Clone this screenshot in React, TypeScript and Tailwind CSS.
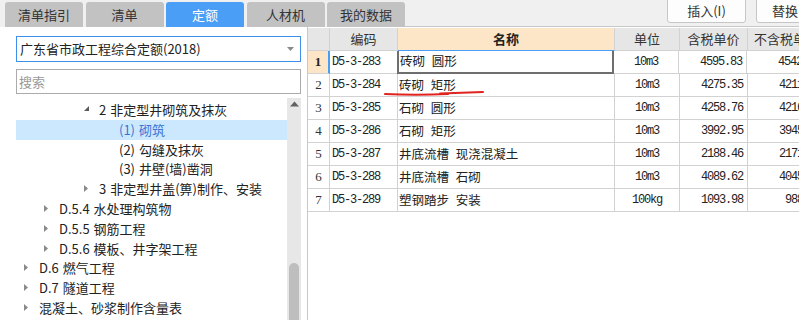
import React from "react";

const cjk = { fontFamily: "'Noto Sans CJK SC', 'Noto Sans', sans-serif" };
const mono = { fontFamily: "'Liberation Mono', 'Noto Sans CJK SC', monospace" };
const serif = { fontFamily: "'Liberation Serif', 'Noto Sans CJK SC', serif" };

const tabs = ["清单指引", "清单", "定额", "人材机", "我的数据"];

type Node = { text: string; arrow: "open" | "closed" | null; arrowX: number; textX: number; selected?: boolean };

const tree: Node[] = [
  { text: "2 非定型井砌筑及抹灰", arrow: "open", arrowX: 67, textX: 83 },
  { text: "(1) 砌筑", arrow: null, arrowX: 0, textX: 103, selected: true },
  { text: "(2) 勾缝及抹灰", arrow: null, arrowX: 0, textX: 103 },
  { text: "(3) 井壁(墙)凿洞", arrow: null, arrowX: 0, textX: 103 },
  { text: "3 非定型井盖(箅)制作、安装", arrow: "closed", arrowX: 67, textX: 83 },
  { text: "D.5.4 水处理构筑物", arrow: "closed", arrowX: 27, textX: 43 },
  { text: "D.5.5 钢筋工程", arrow: "closed", arrowX: 27, textX: 43 },
  { text: "D.5.6 模板、井字架工程", arrow: "closed", arrowX: 27, textX: 43 },
  { text: "D.6 燃气工程", arrow: "closed", arrowX: 7, textX: 23 },
  { text: "D.7 隧道工程", arrow: "closed", arrowX: 7, textX: 23 },
  { text: "混凝土、砂浆制作含量表", arrow: "closed", arrowX: 7, textX: 23 },
];

const rows = [
  ["D5-3-283", "砖砌 圆形", "10m3", "4595.83", "4542.16"],
  ["D5-3-284", "砖砌 矩形", "10m3", "4275.35", "4211.26"],
  ["D5-3-285", "石砌 圆形", "10m3", "4258.76", "4216.47"],
  ["D5-3-286", "石砌 矩形", "10m3", "3992.95", "3945.18"],
  ["D5-3-287", "井底流槽 现浇混凝土", "10m3", "2188.46", "2171.35"],
  ["D5-3-288", "井底流槽 石砌", "10m3", "4089.62", "4045.90"],
  ["D5-3-289", "塑钢踏步 安装", "100kg", "1093.98", "988.41"],
];

function Arrow({ kind }: { kind: "open" | "closed" }) {
  if (kind === "open")
    return (
      <svg width="7" height="7" viewBox="0 0 7 7">
        <path d="M6 1 L6 6 L1 6 Z" fill="#5a5a5a" />
      </svg>
    );
  return (
    <svg width="6" height="9" viewBox="0 0 6 9">
      <path d="M1 1 L5 4.5 L1 8 Z" fill="#8a8a8a" />
    </svg>
  );
}

export default function App() {
  return (
    <div className="relative w-[799px] h-[320px] overflow-hidden bg-[#f0f0f0] flex flex-col" style={cjk}>
      {/* top strip */}
      <div className="h-[27px] flex items-end shrink-0">
        <div className="flex gap-[2.5px] pl-[5px] h-[25px]">
          {tabs.map((t) => (
            <div
              key={t}
              className={
                t === "定额"
                  ? "w-[78px] h-full rounded-t-[3px] bg-[#4b9ef6] text-white text-[13px] flex items-center justify-center"
                  : "w-[78px] h-full rounded-t-[3px] bg-[#c2c2c2] text-[#333] text-[13px] flex items-center justify-center"
              }
            >
              {t}
            </div>
          ))}
        </div>
        <div className="flex-1 h-full border-b border-[#c8c8c8] relative">
          <div className="absolute left-[262px] top-[-4px] w-[79px] h-[27px] rounded-[3px] border border-[#c6c6c6] bg-[#fdfdfd] text-[13px] text-[#333] flex items-center justify-center pt-[2px]">
            插入(I)
          </div>
          <div className="absolute left-[351px] top-[-4px] w-[79px] h-[27px] rounded-[3px] border border-[#c6c6c6] bg-[#fdfdfd] text-[13px] text-[#333] flex items-center justify-start pl-[15px] pt-[2px]">
            替换
          </div>
        </div>
      </div>

      {/* body */}
      <div className="flex flex-1 min-h-0">
        {/* left panel */}
        <div className="w-[307px] bg-white pl-[16px] flex flex-col shrink-0">
          <div className="mt-[9px] w-[285px] h-[26px] border border-[#3d8fea] flex items-center justify-between pl-[3px] pr-[6px] text-[13px] text-[#222]">
            <span>广东省市政工程综合定额(2018)</span>
            <svg width="7" height="4" viewBox="0 0 7 4">
              <path d="M0 0 L7 0 L3.5 4 Z" fill="#8a8a8a" />
            </svg>
          </div>
          <div className="mt-[7px] w-[285px] h-[25px] border border-[#ababab] flex items-center pl-[2px] text-[13px] text-[#9a9a9a]">
            搜索
          </div>
          <div className="mt-[4px] flex flex-1 min-h-0">
            <div className="w-[271px] pt-[2px]">
              {tree.map((n) => (
                <div
                  key={n.text}
                  className={
                    n.selected
                      ? "relative h-[19.8px] bg-[#cce8ff] text-[#3a74d4] text-[13px]"
                      : "relative h-[19.8px] text-[#222] text-[13px]"
                  }
                >
                  {n.arrow && (
                    <span className="absolute top-[5px]" style={{ left: n.arrowX }}>
                      <Arrow kind={n.arrow} />
                    </span>
                  )}
                  <span className="absolute top-[0px] leading-[19.8px] whitespace-nowrap [word-spacing:1px]" style={{ left: n.textX }}>
                    {n.text}
                  </span>
                </div>
              ))}
            </div>
            <div className="w-[14px] bg-[#e7e7e7] flex flex-col items-center">
              <svg width="9" height="6" viewBox="0 0 9 6" className="mt-[3px]">
                <path d="M0 5.5 L4.5 0.5 L9 5.5 Z" fill="#606060" />
              </svg>
              <div className="mt-[156px] w-[10px] flex-1 rounded-t-[5px] bg-[#bebebe]" />
            </div>
          </div>
        </div>

        {/* right table */}
        <div className="flex-1 bg-white border-l border-[#c8c8c8] overflow-hidden pt-[1px]">
          <div className="flex h-[23px] text-[13px] text-[#333] w-[517px]">
            <div className="w-[22px] bg-[#e6e6e6] border-r border-b border-[#d2d2d2]" />
            <div className="w-[68px] bg-[#e6e6e6] border-r border-b border-[#d2d2d2] flex items-center justify-center">编码</div>
            <div className="w-[217px] bg-[#fde6c8] border-r border-[#d2d2d2] border-b border-b-[#4b9ef6] flex items-center justify-center font-bold text-[#222]">名称</div>
            <div className="w-[65px] bg-[#e6e6e6] border-r border-b border-[#d2d2d2] flex items-center justify-center">单位</div>
            <div className="w-[68px] bg-[#e6e6e6] border-r border-b border-[#d2d2d2] flex items-center justify-center">含税单价</div>
            <div className="w-[77px] bg-[#e6e6e6] border-b border-[#d2d2d2] flex items-center justify-center shrink-0 whitespace-nowrap">不含税单价</div>
          </div>
          {rows.map((r, i) => (
            <div key={r[0]} className="flex h-[23px] text-[#222] w-[517px]">
              <div
                className={
                  i === 0
                    ? "w-[22px] bg-[#fde6c8] border-r-2 border-r-[#4b9ef6] border-b border-b-[#d2d2d2] flex items-center justify-center text-[13px] font-bold"
                    : "w-[22px] border-r border-b border-[#d2d2d2] flex items-center justify-center text-[13px] text-[#333]"
                }
                style={serif}
              >
                {i + 1}
              </div>
              <div className="w-[68px] border-r border-b border-[#d2d2d2] flex items-center pl-[2px] text-[12px] tracking-[-1.2px]" style={mono}>
                {r[0]}
              </div>
              <div
                className={
                  i === 0
                    ? "w-[217px] border-l-2 border-r-2 border-b-2 border-[#6e6e6e] -ml-[1px] flex items-center pl-[1px] text-[12.5px] whitespace-pre [word-spacing:4px]"
                    : "w-[217px] border-r border-b border-[#d2d2d2] flex items-center pl-[1px] text-[12.5px] whitespace-pre [word-spacing:4px]"
                }
              >
                {r[1]}
              </div>
              <div className="w-[65px] border-r border-b border-[#d2d2d2] flex items-center justify-center text-[12px] tracking-[-1.2px]" style={mono}>
                {r[2]}
              </div>
              <div className="w-[68px] border-r border-b border-[#d2d2d2] flex items-center justify-end pr-[4px] text-[12px] tracking-[-1.2px]" style={mono}>
                {r[3]}
              </div>
              <div className="w-[77px] shrink-0 border-b border-[#d2d2d2] flex items-center justify-end pr-[4px] text-[12px] tracking-[-1.2px]" style={mono}>
                {r[4]}
              </div>
            </div>
          ))}
        </div>
      </div>

      {/* red hand-drawn underline */}
      <svg className="absolute left-0 top-0 pointer-events-none" width="799" height="320">
        <path d="M385 94 Q 415 95.5 448 94" stroke="#e0231f" strokeWidth="2" fill="none" strokeLinecap="round" />
        <path d="M440 93.5 Q 462 92.5 483 92" stroke="#e0231f" strokeWidth="2" fill="none" strokeLinecap="round" />
      </svg>
    </div>
  );
}
